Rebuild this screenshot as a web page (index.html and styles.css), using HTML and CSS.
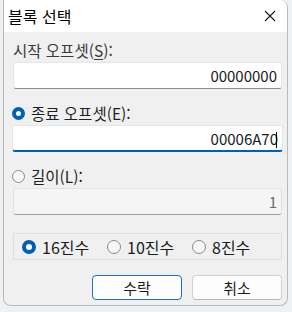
FILE: index.html
```html
<!DOCTYPE html>
<html lang="ko">
<head>
<meta charset="utf-8">
<title>블록 선택</title>
<link rel="stylesheet" href="styles.css">
</head>
<body>
<div class="window">
  <div class="titlebar">
    <span class="title">블록 선택</span>
    <svg class="close" width="12" height="12" viewBox="0 0 12 12"><path d="M1 1L11 11M11 1L1 11" stroke="#1a1a1a" stroke-width="1.1" fill="none"/></svg>
  </div>
  <div class="content">
    <div class="label plain">시작 오프셋(<u>S</u>):</div>
    <div class="field">00000000</div>

    <div class="label radio-row"><span class="radio on"></span>종료 오프셋(E):</div>
    <div class="field focused">00006A70<span class="caret"></span></div>

    <div class="label radio-row"><span class="radio"></span>길이(L):</div>
    <div class="field disabled">1</div>

    <div class="group">
      <span class="opt"><span class="radio on"></span>16진수</span>
      <span class="opt"><span class="radio"></span>10진수</span>
      <span class="opt"><span class="radio"></span>8진수</span>
    </div>

    <div class="buttons">
      <button class="btn default">수락</button>
      <button class="btn">취소</button>
    </div>
  </div>
</div>
</body>
</html>
```
FILE: styles.css
```css
html, body {
  margin: 0;
  padding: 0;
  background: #eef0f2;
  font-family: "Segoe UI", "Noto Sans CJK KR", "Noto Sans", sans-serif;
  color: #1b1b1b;
}
.window {
  margin-left: 3px;
  width: 285px;
  height: 306px;
  border: 1px solid #b9b9b9;
  border-top: none;
  border-radius: 0 8px 8px 8px;
  background: #f0f0f0;
  overflow: hidden;
  display: flex;
  flex-direction: column;
  box-sizing: border-box;
}
.titlebar {
  height: 32px;
  background: #ffffff;
  display: flex;
  align-items: center;
  justify-content: space-between;
  padding: 0 11px 0 4px;
  flex: none;
}
.title {
  font-size: 16px;
  line-height: 20px;
  color: #000;
}
.close { display: block; margin-top: 0; }
.content {
  padding: 10px 5px 0 9px;
  display: flex;
  flex-direction: column;
}
.label {
  font-size: 15.5px;
  line-height: 16px;
  height: 16px;
  color: #1f1f1f;
  display: flex;
  align-items: center;
}
.label.plain { color: #3a3a3a; }
.label u { text-decoration: underline; text-underline-offset: 2px; }
.field {
  margin-top: 4px;
  height: 27px;
  box-sizing: border-box;
  background: #fff;
  border: 1px solid #e6e6e6;
  border-bottom: 1px solid #8c8c8c;
  border-radius: 3px;
  font-size: 15px;
  line-height: 25px;
  text-align: right;
  padding-right: 4px;
  color: #1b1b1b;
  margin-bottom: 16px;
}
.field.focused {
  border-bottom: 2px solid #005fb8;
  margin-left: -1px;
  margin-right: -1px;
  padding-right: 5px;
}
.caret {
  display: inline-block;
  width: 1px;
  height: 16px;
  background: #000;
  vertical-align: -3px;
  margin-left: -2px;
}
.field.disabled {
  background: #f5f5f5;
  border-color: #e2e2e2;
  border-bottom-color: #a0a0a0;
  color: #6b6b6b;
  margin-bottom: 18px;
}
.radio-row { margin-left: -1px; }
.radio {
  display: inline-block;
  width: 13px;
  height: 13px;
  box-sizing: border-box;
  border-radius: 50%;
  border: 1px solid #8a8a8a;
  background: #f7f7f7;
  margin-right: 6px;
  flex: none;
}
.radio.on {
  border: 4px solid #005fb8;
  background: #fff;
}
.group {
  height: 27px;
  box-sizing: border-box;
  border: 1px solid #dedede;
  display: flex;
  align-items: center;
  padding-left: 8px;
  font-size: 16px;
}
.opt {
  display: flex;
  align-items: center;
  width: 85px;
  color: #1b1b1b;
}
.opt .radio { width: 14px; height: 14px; }
.buttons {
  margin-top: 15px;
  display: flex;
  justify-content: flex-end;
  gap: 10px;
}
.btn {
  width: 90px;
  height: 25px;
  box-sizing: border-box;
  border: 1px solid #d0d0d0;
  border-bottom-color: #b8b8b8;
  border-radius: 4px;
  background: #fdfdfd;
  font-family: inherit;
  font-size: 15px;
  color: #1b1b1b;
  padding: 0;
}
.btn.default {
  border: 1.5px solid #1f6fc4;
}
```
